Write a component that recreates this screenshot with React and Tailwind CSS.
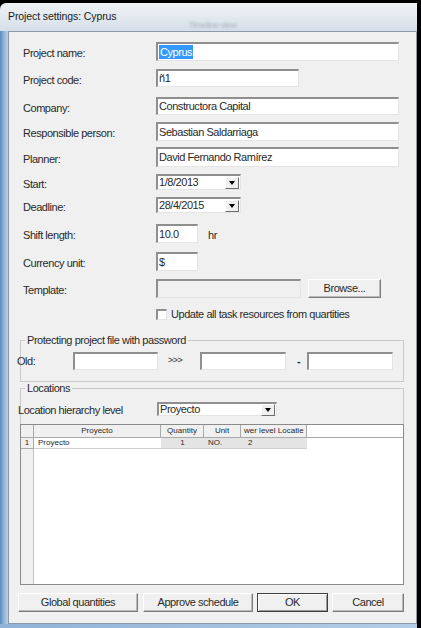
const sans = "font-['Liberation_Sans',Arial,sans-serif]";

const sunken =
  "border-t-2 border-l-2 border-t-[#8f8f8f] border-l-[#8f8f8f] border-b border-r border-b-[#e4e4e4] border-r-[#e4e4e4]";

function Field({ className = "", disabled, children }) {
  return (
    <div
      className={`h-full flex items-center pl-[1px] overflow-hidden whitespace-nowrap ${sunken} ${
        disabled ? "bg-[#f0f0f0]" : "bg-white"
      } ${className}`}
    >
      {children}
    </div>
  );
}

function Arrow() {
  return (
    <span className="w-[14px] h-[12px] shrink-0 flex items-center justify-center bg-[#f0f0f0] border border-t-white border-l-white border-b-[#6f6f6f] border-r-[#6f6f6f]">
      <span className="w-0 h-0 border-l-[3px] border-r-[3px] border-t-[4px] border-l-transparent border-r-transparent border-t-black" />
    </span>
  );
}

function Combo({ value, className = "" }) {
  return (
    <div
      className={`h-full flex items-center bg-white pl-[1px] pr-[1px] ${sunken} ${className}`}
    >
      <span className="flex-1 whitespace-nowrap">{value}</span>
      <Arrow />
    </div>
  );
}

function Btn({ children, className = "", primary }) {
  return (
    <div
      className={`h-full flex items-center justify-center bg-[#f0f0f0] border ${
        primary
          ? "border-[#3f3f3f] shadow-[inset_1px_1px_0_#ffffff,inset_-1px_-1px_0_#9a9a9a]"
          : "border-t-white border-l-white border-b-[#7c7c7c] border-r-[#7c7c7c] shadow-[inset_-1px_-1px_0_#b9b9b9]"
      } ${className}`}
    >
      {children}
    </div>
  );
}

function Row({ label, className = "", children }) {
  return (
    <div className={`flex items-center ${className}`}>
      <span className="w-[133px] shrink-0 pt-[4px] whitespace-nowrap">{label}</span>
      {children}
    </div>
  );
}

function GroupBox({ title, className = "", children }) {
  return (
    <fieldset className={`ml-[11px] w-[384px] border border-[#c9c9c9] ${className}`}>
      <legend className="ml-[4px] px-[2px] leading-[13px]">{title}</legend>
      {children}
    </fieldset>
  );
}

export default function App() {
  return (
    <div
      className={`w-[421px] h-[628px] bg-black pt-[3px] pr-[4px] overflow-hidden text-[11px] tracking-[-0.45px] text-[#2a2a2a] ${sans}`}
    >
      <div className="h-full flex flex-col rounded-tl-[6px] overflow-hidden">
        {/* title bar */}
        <div className="h-[28px] shrink-0 flex items-center pl-[8px] bg-gradient-to-b from-[#eef2f6] via-[#e3e9ef] to-[#d5dfe9]">
          <span className="text-[10.5px] tracking-[-0.1px] text-[#1a1a1a]">Project settings: Cyprus</span>
          <span className="ml-[72px] self-end mb-[-1px] text-[9px] text-[#8a949e] blur-[0.8px] opacity-60">
            Timeline view
          </span>
        </div>

        <div className="flex-1 flex min-h-0">
          <div className="w-[8px] shrink-0 bg-gradient-to-r from-[#5a8bc2] via-[#93b5d8] to-[#bcd0e4]" />

          {/* client */}
          <div className="flex-1 flex flex-col bg-[#f0f0f0] border border-[#8c99a8]">
            <div className="pl-[14px] pt-[10px]">
              <Row label="Project name:" className="h-[19px]">
                <Field className="w-[243px]">
                  <span className="bg-[#3399ff] text-white px-[1px] leading-[14px]">Cyprus</span>
                </Field>
              </Row>
              <Row label="Project code:" className="h-[18px] mt-[8px]">
                <Field className="w-[143px]">ñ1</Field>
              </Row>
              <Row label="Company:" className="h-[18px] mt-[10px]">
                <Field className="w-[243px]">Constructora Capital</Field>
              </Row>
              <Row label="Responsible person:" className="h-[19px] mt-[7px]">
                <Field className="w-[243px]">Sebastian Saldarriaga</Field>
              </Row>
              <Row label="Planner:" className="h-[20px] mt-[6px]">
                <Field className="w-[243px]">David Fernando Ramírez</Field>
              </Row>
              <Row label="Start:" className="h-[16px] mt-[7px]">
                <Combo value="1/8/2013" className="w-[85px]" />
              </Row>
              <Row label="Deadline:" className="h-[16px] mt-[7px]">
                <Combo value="28/4/2015" className="w-[85px]" />
              </Row>
              <Row label="Shift length:" className="h-[19px] mt-[11px]">
                <Field className="w-[42px]">10.0</Field>
                <span className="ml-[10px] pt-[4px]">hr</span>
              </Row>
              <Row label="Currency unit:" className="h-[19px] mt-[9px]">
                <Field className="w-[42px]">$</Field>
              </Row>
              <Row label="Template:" className="h-[19px] mt-[8px]">
                <Field className="w-[145px]" disabled />
                <Btn className="w-[73px] ml-[7px]">Browse...</Btn>
              </Row>
              <div className="h-[11px] mt-[11px] flex items-center">
                <span className="w-[133px] shrink-0" />
                <span className={`w-[11px] h-[11px] bg-white ${sunken}`} />
                <span className="ml-[4px]">Update all task resources from quartities</span>
              </div>
            </div>

            <GroupBox title="Protecting project file with password" className="mt-[14px]">
              <div className="h-[18px] mt-[5px] mb-[11px] flex items-center">
                <span className="-ml-[4px] w-[56px] shrink-0">Old:</span>
                <Field className="w-[85px]" />
                <span className="ml-[10px] w-[32px] text-[9px]">&gt;&gt;&gt;</span>
                <Field className="w-[86px]" />
                <span className="ml-[11px] w-[10px] font-bold">-</span>
                <Field className="w-[86px]" />
              </div>
            </GroupBox>

            <GroupBox title="Locations" className="border-b-0">
              <div className="h-[14px] mt-[7px] flex items-center">
                <span className="-ml-[3px] w-[139px] shrink-0 pt-[3px]">Location hierarchy level</span>
                <Combo value="Proyecto" className="w-[120px]" />
              </div>

              <div className="-mx-px mt-[8px] h-[161px] flex flex-col bg-white border border-[#8a8a8a] text-[8px] tracking-normal">
                <div className="h-[13px] flex border-b border-[#a9a9a9]">
                  <span className="w-[13px] bg-[#f0f0f0] border-r border-[#a9a9a9]" />
                  <span className="w-[127px] bg-[#f0f0f0] border-r border-[#a9a9a9] flex items-center justify-center">Proyecto</span>
                  <span className="w-[43px] bg-[#f0f0f0] border-r border-[#a9a9a9] flex items-center justify-center">Quantity</span>
                  <span className="w-[37px] bg-[#f0f0f0] border-r border-[#a9a9a9] flex items-center justify-center">Unit</span>
                  <span className="w-[66px] bg-[#f0f0f0] border-r border-[#a9a9a9] flex items-center pl-[3px] overflow-hidden whitespace-nowrap">wer level Locatie</span>
                </div>
                <div className="h-[11px] flex">
                  <span className="w-[13px] bg-[#f0f0f0] border-r border-b border-[#a9a9a9] flex items-center justify-center">1</span>
                  <span className="w-[127px] border-b border-[#d0d0d0] flex items-center pl-[4px]">Proyecto</span>
                  <span className="w-[43px] bg-[#e4e4e4] border-b border-[#d0d0d0] flex items-center justify-center">1</span>
                  <span className="w-[37px] bg-[#e4e4e4] border-b border-[#d0d0d0] flex items-center pl-[4px]">NO.</span>
                  <span className="w-[66px] bg-[#e4e4e4] border-b border-[#d0d0d0] flex items-center pl-[7px]">2</span>
                </div>
                <div className="flex-1 flex">
                  <span className="w-[13px] bg-[#f0f0f0] border-r border-[#c4c4c4]" />
                </div>
              </div>
            </GroupBox>

            <div className="h-[19px] mt-[8px] ml-[9px] flex gap-[4px]">
              <Btn className="w-[120px] mr-[1px]">Global quantities</Btn>
              <Btn className="w-[110px]">Approve schedule</Btn>
              <Btn className="w-[71px]" primary>OK</Btn>
              <Btn className="w-[72px]">Cancel</Btn>
            </div>
          </div>
        </div>

        <div className="h-[4px] shrink-0 bg-gradient-to-r from-[#8fb2d6] to-[#b4cde6]" />
      </div>
    </div>
  );
}
